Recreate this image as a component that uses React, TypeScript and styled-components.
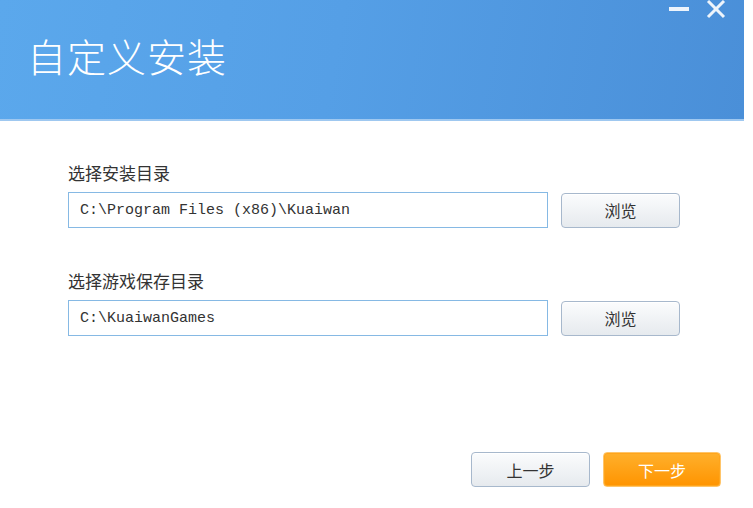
import React from "react";
import styled, {createGlobalStyle} from "styled-components";

const GlobalStyle = createGlobalStyle`
  html, body {
    margin: 0;
    padding: 0;
    background: #ffffff;
  }
  body {
    font-family: "Noto Sans CJK SC", "Noto Sans", sans-serif;
  }
`;

const Window = styled.div`
  width: 744px;
  height: 508px;
  display: flex;
  flex-direction: column;
  background: #ffffff;
`;

const Header = styled.div`
  height: 119px;
  display: flex;
  align-items: flex-start;
  justify-content: space-between;
  background: linear-gradient(100deg, #5ba8ec 0%, #559fe6 45%, #4a8fd8 100%);
  border-bottom: 2px solid #9fc8f0;
`;

const Title = styled.h1`
  margin: 30px 0 0 27px;
  font-size: 39px;
  font-weight: 300;
  line-height: 50px;
  color: #ffffff;
  letter-spacing: 1px;
`;

const Controls = styled.div`
  display: flex;
  align-items: flex-start;
  gap: 16px;
  padding: 0 18px 0 0;
`;

const Content = styled.div`
  flex: 1;
  display: flex;
  flex-direction: column;
  padding: 41px 0 0 68px;
`;

const Field = styled.div`
  display: flex;
  flex-direction: column;
  margin-bottom: 42px;
`;

const Label = styled.div`
  font-size: 17px;
  line-height: 22px;
  color: #333333;
  margin-bottom: 8px;
`;

const Row = styled.div`
  display: flex;
  align-items: center;
  gap: 13px;
`;

const PathBox = styled.div`
  box-sizing: border-box;
  width: 480px;
  height: 36px;
  border: 1px solid #86b9e4;
  padding: 0 11px;
  display: flex;
  align-items: center;
  font-family: "Liberation Mono", "DejaVu Sans Mono", monospace;
  font-size: 15px;
  color: #333333;
  white-space: pre;
`;

const Button = styled.button<{ $primary?: boolean }>`
  box-sizing: border-box;
  width: ${p => (p.$primary ? 118 : 119)}px;
  height: 35px;
  border-radius: 4px;
  border: 1px solid ${p => (p.$primary ? "#ffc56a" : "#a7b8cc")};
  background: ${p =>
    p.$primary
      ? "linear-gradient(#ffb02c, #ff9400)"
      : "linear-gradient(#fbfcfd, #e6eaee)"};
  box-shadow: ${p => (p.$primary ? "inset 0 0 0 1px #ffa51c" : "inset 0 1px 0 #ffffff")};
  color: ${p => (p.$primary ? "#ffffff" : "#333333")};
  font-family: "Noto Sans CJK SC", sans-serif;
  font-size: 16px;
  padding: 0;
`;

const Footer = styled.div`
  display: flex;
  justify-content: flex-end;
  gap: 13px;
  padding: 0 23px 21px 0;
`;

const App: React.FC = () => {
    return (
        <>
            <GlobalStyle/>
            <Window>
                <Header>
                    <Title>自定义安装</Title>
                    <Controls>
                        <svg width="22" height="20" viewBox="0 0 22 20">
                            <rect x="1" y="7" width="20" height="4" fill="#ffffff" opacity="0.9"/>
                        </svg>
                        <svg width="20" height="19" viewBox="0 0 20 19">
                            <path d="M2 1 L18 17 M18 1 L2 17" stroke="#ffffff" strokeWidth="3" opacity="0.9"/>
                        </svg>
                    </Controls>
                </Header>
                <Content>
                    <Field>
                        <Label>选择安装目录</Label>
                        <Row>
                            <PathBox>C:\Program Files (x86)\Kuaiwan</PathBox>
                            <Button>浏览</Button>
                        </Row>
                    </Field>
                    <Field>
                        <Label>选择游戏保存目录</Label>
                        <Row>
                            <PathBox>C:\KuaiwanGames</PathBox>
                            <Button>浏览</Button>
                        </Row>
                    </Field>
                </Content>
                <Footer>
                    <Button>上一步</Button>
                    <Button $primary>下一步</Button>
                </Footer>
            </Window>
        </>
    );
}

export default App
